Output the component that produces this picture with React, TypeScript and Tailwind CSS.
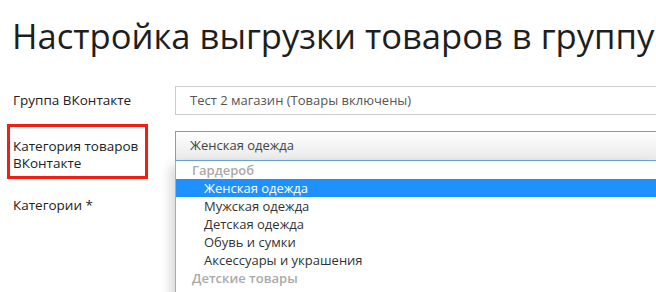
import React from 'react';

const options: { label: string; group?: boolean; active?: boolean }[] = [
  { label: 'Гардероб', group: true },
  { label: 'Женская одежда', active: true },
  { label: 'Мужская одежда' },
  { label: 'Детская одежда' },
  { label: 'Обувь и сумки' },
  { label: 'Аксессуары и украшения' },
  { label: 'Детские товары', group: true },
  { label: 'Автокресла' },
];

const App = () => {
  return (
    <div className="w-[656px] h-[292px] overflow-hidden bg-white font-['Open_Sans',sans-serif] text-[#222]">
      <h1 className="pl-[12px] pt-[12px] text-[34.6px] leading-[48px] text-[#1e1e1e] whitespace-nowrap">
        Настройка выгрузки товаров в группу
      </h1>

      <div className="mt-[26px] flex flex-col">
        {/* Group */}
        <div className="flex items-center h-[29px]">
          <div className="w-[175px] pl-[13px] text-[13.5px]">Группа ВКонтакте</div>
          <div className="flex-1 h-[29px] border border-[#ccc] border-r-0 bg-white pl-[14px] flex items-center text-[13px] text-[#555] whitespace-nowrap">
            Тест 2 магазин (Товары включены)
          </div>
        </div>

        {/* Category */}
        <div className="flex mt-[9px]">
          <div className="w-[175px] pl-[7px]">
            <div className="w-[141px] h-[55px] border-[3px] border-[#f01e14] pl-[3px] pt-[11px] text-[13.5px] leading-[17px]">
              Категория товаров ВКонтакте
            </div>
          </div>
          <div className="flex-1 relative mt-[7px]">
            <div className="h-[30px] border border-[#6aa5d9] border-r-0 bg-gradient-to-b from-white to-[#e9e9e9] pl-[14px] flex items-center text-[13px] text-[#444] whitespace-nowrap">
              Женская одежда
            </div>
            <div className="absolute left-0 right-0 top-[30px] h-[140px] bg-white border-l border-[#aaa] shadow-[-5px_4px_10px_rgba(0,0,0,0.15)] overflow-hidden">
              {options.map((o) =>
                o.group ? (
                  <div key={o.label} className="h-[18px] leading-[18px] pl-[16px] text-[13px] font-semibold text-[#aaa]">
                    {o.label}
                  </div>
                ) : (
                  <div
                    key={o.label}
                    className={`h-[18px] leading-[18px] pl-[28px] text-[13px] ${o.active ? 'bg-[#1e90ff] text-white' : 'text-[#333]'}`}
                  >
                    {o.label}
                  </div>
                )
              )}
            </div>
          </div>
        </div>

        {/* Categories */}
        <div className="flex mt-[16px]">
          <div className="w-[175px] pl-[13px] text-[13.5px]">Категории *</div>
        </div>
      </div>
    </div>
  );
};

export default App;
